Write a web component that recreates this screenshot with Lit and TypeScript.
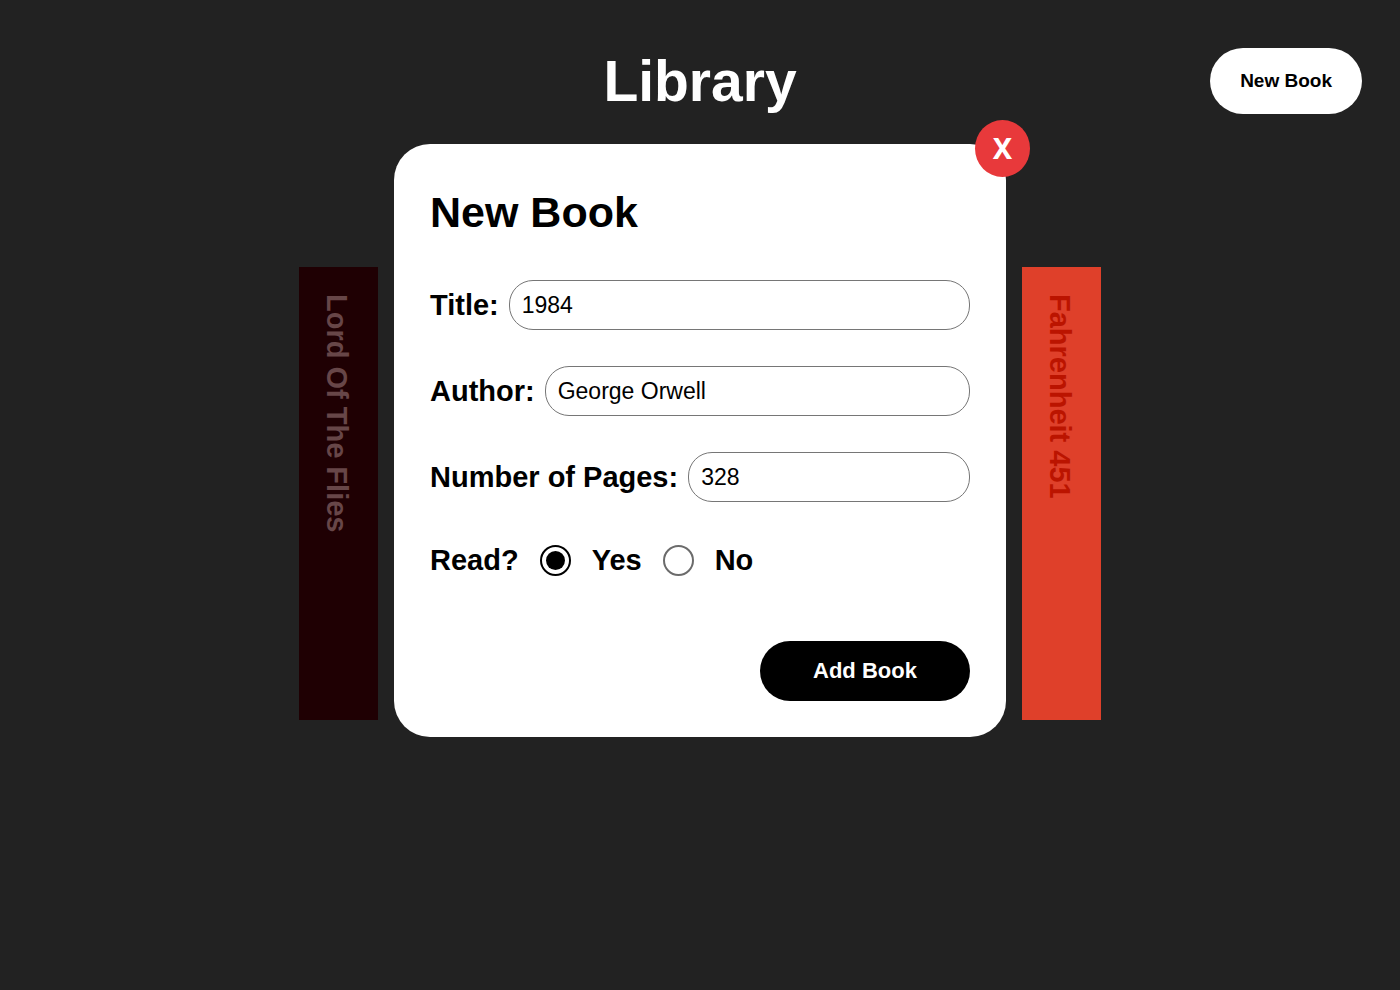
import { LitElement, html, css } from "lit";
import { customElement, property, state } from "lit/decorators.js";

@customElement("book-spine")
class BookSpine extends LitElement {
  @property() name = "";

  static styles = css`
    :host {
      box-sizing: border-box;
      display: flex;
      align-items: center;
      writing-mode: vertical-rl;
      width: 79px;
      height: 453px;
      padding: 27px 4px 27px 0;
      background: #1f0003;
      color: #674648;
    }
    :host([tone="ember"]) {
      background: #df402a;
      color: #bb1400;
    }
    .name {
      margin: 0;
      width: 100%;
      font-size: 29px;
      line-height: 75px;
      font-weight: 700;
      white-space: nowrap;
    }
  `;

  render() {
    return html`<h2 class="name">${this.name}</h2>`;
  }
}

@customElement("app-root")
class AppRoot extends LitElement {
  @state() private open = true;
  @state() private books = [
    { name: "Lord Of The Flies", tone: "dark" },
    { name: "Fahrenheit 451", tone: "ember" },
  ];

  static styles = css`
    :host {
      display: block;
      position: relative;
      min-height: 100vh;
      background: #222222;
      color: #ffffff;
      font-family: "Liberation Sans", Arial, Helvetica, sans-serif;
    }
    * {
      box-sizing: border-box;
    }
    button,
    input {
      font-family: inherit;
      margin: 0;
    }
    button {
      border: 0;
      font-weight: 700;
      cursor: pointer;
    }
    .header {
      display: grid;
      grid-template-columns: 1fr auto 1fr;
      align-items: center;
      padding: 48px 38px 0;
    }
    .brand {
      grid-column: 2;
      margin: 0;
      font-size: 57px;
      line-height: 66px;
    }
    .new {
      justify-self: end;
      height: 66px;
      padding: 0 30px;
      border-radius: 33px;
      background: #ffffff;
      color: #000000;
      font-size: 19px;
    }
    .shelf {
      display: flex;
      justify-content: space-between;
      max-width: 802px;
      margin: 0 auto;
      padding: 153px 0 48px;
    }
    .overlay {
      position: absolute;
      inset: 0;
      display: flex;
      justify-content: center;
      align-items: flex-start;
      padding-top: 144px;
    }
    .modal {
      position: relative;
      display: flex;
      flex-direction: column;
      gap: 36px;
      width: 100%;
      max-width: 612px;
      padding: 36px;
      border-radius: 36px;
      background: #ffffff;
      color: #000000;
      font-size: 29px;
      font-weight: 700;
    }
    .heading {
      margin: 0;
      font-size: 43px;
      line-height: 64px;
    }
    .close {
      position: absolute;
      top: -24px;
      right: -24px;
      width: 55px;
      height: 57px;
      padding: 0 0 2px;
      border-radius: 50%;
      background: #e8393b;
      color: #ffffff;
      font-family: "Noto Sans", "Open Sans", sans-serif;
      font-size: 29px;
      line-height: 55px;
    }
    .row {
      display: flex;
      align-items: center;
      gap: 10px;
    }
    .field {
      flex: 1;
      min-width: 0;
      height: 50px;
      padding: 0 12px;
      border: 1px solid #767676;
      border-radius: 24px;
      background: #ffffff;
      color: #000000;
      font-size: 23px;
      outline: 0;
    }
    .choices {
      height: 44px;
      margin: 0;
      gap: 21px;
    }
    .radio {
      appearance: none;
      display: grid;
      place-items: center;
      width: 31px;
      height: 31px;
      border: 2px solid #6b6b6b;
      border-radius: 50%;
      background: #ffffff;
    }
    .radio:checked {
      border-color: #000000;
    }
    .radio:checked::before {
      content: "";
      width: 19px;
      height: 19px;
      border-radius: 50%;
      background: #000000;
    }
    .add {
      align-self: flex-end;
      width: 210px;
      height: 60px;
      margin-top: 23px;
      border-radius: 30px;
      background: #000000;
      color: #ffffff;
      font-size: 22px;
    }
  `;

  private submit(event: Event) {
    event.preventDefault();
    const data = new FormData(event.target as HTMLFormElement);
    this.books = [...this.books, { name: String(data.get("title")), tone: "dark" }];
    this.open = false;
  }

  private renderForm() {
    return html`
      <div class="overlay">
        <form class="modal" @submit=${this.submit}>
          <button class="close" type="button" aria-label="Close" @click=${() => (this.open = false)}>X</button>
          <h2 class="heading">New Book</h2>
          <div class="row">
            <label for="title">Title:</label>
            <input class="field" id="title" name="title" type="text" value="1984" />
          </div>
          <div class="row">
            <label for="author">Author:</label>
            <input class="field" id="author" name="author" type="text" value="George Orwell" />
          </div>
          <div class="row">
            <label for="pages">Number of Pages:</label>
            <input class="field" id="pages" name="pages" type="text" inputmode="numeric" value="328" />
          </div>
          <div class="row choices" role="radiogroup" aria-labelledby="read">
            <span id="read">Read?</span>
            <input class="radio" id="yes" type="radio" name="read" value="yes" checked />
            <label for="yes">Yes</label>
            <input class="radio" id="no" type="radio" name="read" value="no" />
            <label for="no">No</label>
          </div>
          <button class="add" type="submit">Add Book</button>
        </form>
      </div>
    `;
  }

  render() {
    return html`
      <header class="header">
        <h1 class="brand">Library</h1>
        <button class="new" type="button" @click=${() => (this.open = true)}>New Book</button>
      </header>
      <main class="shelf">
        ${this.books.map((b) => html`<book-spine name=${b.name} tone=${b.tone}></book-spine>`)}
      </main>
      ${this.open ? this.renderForm() : ""}
    `;
  }
}
